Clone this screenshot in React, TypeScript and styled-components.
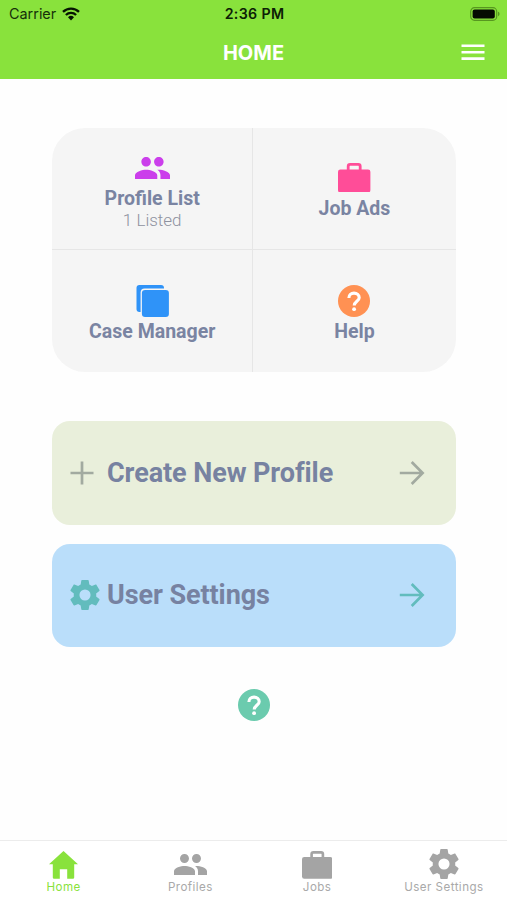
import React from "react";
import styled, { createGlobalStyle } from "styled-components";

const Global = createGlobalStyle`
  * { box-sizing: border-box; }
  body { margin: 0; background: #fff; }
  svg { display: block; flex: none; }
  button { border: 0; padding: 0; margin: 0; background: none; font: inherit; color: inherit; }
`;

const Screen = styled.div`
  width: 507px;
  height: 900px;
  display: flex;
  flex-direction: column;
  background: #fefefe;
  font-family: Roboto, sans-serif;
  overflow: hidden;
`;

const Header = styled.header`
  height: 79px;
  flex: none;
  background: #89e23c;
`;

const StatusBar = styled.div`
  height: 28px;
  padding: 0 7px 0 9px;
  display: grid;
  grid-template-columns: 1fr auto 1fr;
  align-items: center;
  font: 400 14.4px/28px Inter, sans-serif;
  color: #16300a;
`;

const Carrier = styled.div`
  display: flex;
  align-items: center;
  gap: 6px;
`;

const Time = styled.div`
  font-weight: 600;
  font-size: 14.2px;
  letter-spacing: 0.35px;
  color: #0c2005;
`;

const BatteryWrap = styled.div`
  display: flex;
  justify-content: flex-end;
`;

const TitleBar = styled.div`
  height: 49px;
  padding: 0 22px;
  display: grid;
  grid-template-columns: 1fr auto 1fr;
  align-items: center;
`;

const Title = styled.h1`
  grid-column: 2;
  margin: 0;
  font: 700 20px/24px Inter, sans-serif;
  letter-spacing: 0;
  color: #fff;
`;

const MenuButton = styled.button`
  justify-self: end;
`;

const Content = styled.main`
  flex: 1;
  padding: 49px 51.5px 0 52px;
  display: flex;
  flex-direction: column;
  align-items: stretch;
`;

const TileGrid = styled.section`
  height: 244px;
  flex: none;
  display: grid;
  grid-template-columns: 201.4px 1fr;
  grid-template-rows: 122px 122px;
  border-radius: 33px;
  background: #f5f5f5;
  overflow: hidden;
`;

const Tile = styled.button<{ $right?: boolean; $bottom?: boolean }>`
  display: flex;
  flex-direction: column;
  align-items: center;
  justify-content: center;
  padding-top: ${(p) => (p.$bottom ? 3 : 2)}px;
  border-right: ${(p) => (p.$right ? "0" : "1px solid #e6e6e6")};
  border-bottom: ${(p) => (p.$bottom ? "0" : "1px solid #e6e6e6")};
`;

const TileIcon = styled.span`
  height: 38px;
  display: flex;
  align-items: center;
`;

const TileTitle = styled.span`
  font-size: 19.5px;
  line-height: 24px;
  font-weight: 700;
  color: #7a84a2;
`;

const TileNote = styled.span`
  font-size: 17px;
  line-height: 19px;
  font-weight: 300;
  color: #8f929f;
`;

const ActionCard = styled.button<{ $bg: string; $top: number }>`
  height: 103.5px;
  margin-top: ${(p) => p.$top}px;
  flex: none;
  padding: 0 31px 0 18px;
  display: flex;
  align-items: center;
  border-radius: 18px;
  background: ${(p) => p.$bg};
`;

const ActionIcon = styled.span`
  width: 37px;
  display: flex;
`;

const ActionLabel = styled.span`
  flex: 1;
  text-align: left;
  font-size: 27px;
  line-height: 34px;
  font-weight: 700;
  letter-spacing: -0.08px;
  color: #7782a1;
`;

const HelpButton = styled.button`
  margin-top: 42px;
  align-self: center;
`;

const TabBar = styled.nav`
  height: 60px;
  flex: none;
  display: grid;
  grid-template-columns: repeat(4, 1fr);
  border-top: 1px solid #ececec;
  background: #fff;
`;

const Tab = styled.button<{ $active?: boolean }>`
  display: flex;
  flex-direction: column;
  align-items: center;
  color: ${(p) => (p.$active ? "#89e23c" : "#a9a9a9")};
`;

const TabIcon = styled.span<{ $lift?: number }>`
  height: 38px;
  padding-bottom: ${(p) => p.$lift ?? 0}px;
  display: flex;
  align-items: flex-end;
`;

const TabLabel = styled.span`
  margin-top: 0.5px;
  padding-left: 0.5px;
  font: 400 11.6px/14px Inter, sans-serif;
  letter-spacing: 0.45px;
`;

const WifiIcon = () => (
  <svg width="18" height="14" viewBox="0 0 18 14" fill="none" stroke="#061502" strokeWidth="2.3">
    <path d="M1 4.9a11.4 11.4 0 0 1 16 0M3.9 8a7.2 7.2 0 0 1 10.2 0" />
    <path d="M6 10.3a4.3 4.3 0 0 1 6 0L9 13.6z" fill="#061502" stroke="none" />
  </svg>
);

const BatteryIcon = () => (
  <svg width="30" height="14" viewBox="0 0 30 14">
    <rect x="0.7" y="0.7" width="26" height="12.6" rx="3.8" fill="none" stroke="#579720" strokeWidth="1.2" />
    <rect x="2.6" y="2.6" width="22.2" height="8.8" rx="2" fill="#050b02" />
    <path d="M28 4.8c2 .6 2 3.8 0 4.4z" fill="#579720" />
  </svg>
);

const MenuIcon = () => (
  <svg width="24" height="17" viewBox="0 0 24 17" fill="#fff">
    <path d="M0.5 0.5h23V3.1h-23zM0.5 6.9h23v2.6h-23zM0.5 13.3h23v2.6h-23z" />
  </svg>
);

const PeopleIcon = ({ width, color }: { width: number; color: string }) => (
  <svg width={width} height={(width * 14) / 22} viewBox="1 5 22 14" fill={color}>
    <path d="M16 11c1.66 0 2.99-1.34 2.99-3S17.66 5 16 5s-3 1.34-3 3 1.34 3 3 3zm-8 0c1.66 0 2.99-1.34 2.99-3S9.66 5 8 5 5 6.34 5 8s1.34 3 3 3zm0 2c-2.33 0-7 1.17-7 3.5V19h14v-2.5c0-2.33-4.67-3.5-7-3.5zm8 0c-.29 0-.62.02-.97.05 1.16.84 1.97 1.97 1.97 3.45V19h6v-2.5c0-2.33-4.67-3.5-7-3.5z" />
  </svg>
);

const WorkIcon = ({ width, color }: { width: number; color: string }) => (
  <svg width={width} height={(width * 29.5) / 32.4} viewBox="0 0 32.4 29.5">
    <rect x="0" y="6.4" width="32.4" height="23.1" rx="2.4" fill={color} />
    <path d="M10.2 8V3.3Q10.2 1.4 12.1 1.4H20.3Q22.2 1.4 22.2 3.3V8" fill="none" stroke={color} strokeWidth="2.8" />
  </svg>
);

const StackIcon = () => (
  <svg width="33" height="32" viewBox="0 0 33 32">
    <rect x="0.5" y="0" width="27.5" height="27" rx="3" fill="#2f93f8" />
    <rect x="4.6" y="3.6" width="29" height="29" rx="4" fill="#f5f5f5" />
    <rect x="5.9" y="4.9" width="27" height="27" rx="3.2" fill="#2f93f8" />
  </svg>
);

const HelpIcon = ({ color }: { color: string }) => (
  <svg width="32" height="32" viewBox="0 0 32 32" fill="none">
    <circle cx="16" cy="16" r="16" fill={color} />
    <path d="M10.9 12.9C10.9 9.9 13.1 8.1 16 8.1C19 8.1 21.2 10 21.2 12.7C21.2 16.2 16.2 16.4 16.2 20.6" stroke="#fff" strokeWidth="3.1" />
    <circle cx="16.1" cy="24.2" r="1.9" fill="#fff" />
  </svg>
);

const GearIcon = ({ size, color }: { size: number; color: string }) => (
  <svg width={size} height={size} viewBox="2 2 20 20" fill={color}>
    <path d="M19.43 12.98c.04-.32.07-.64.07-.98s-.03-.66-.07-.98l2.11-1.65c.19-.15.24-.42.12-.64l-2-3.46c-.12-.22-.39-.3-.61-.22l-2.49 1c-.52-.4-1.08-.73-1.69-.98l-.38-2.65C14.46 2.18 14.25 2 14 2h-4c-.25 0-.46.18-.49.42l-.38 2.65c-.61.25-1.17.59-1.69.98l-2.49-1c-.23-.09-.49 0-.61.22l-2 3.46c-.13.22-.07.49.12.64l2.11 1.65c-.04.32-.07.65-.07.98s.03.66.07.98l-2.11 1.65c-.19.15-.24.42-.12.64l2 3.46c.12.22.39.3.61.22l2.49-1c.52.4 1.08.73 1.69.98l.38 2.65c.03.24.24.42.49.42h4c.25 0 .46-.18.49-.42l.38-2.65c.61-.25 1.17-.59 1.69-.98l2.49 1c.23.09.49 0 .61-.22l2-3.46c.12-.22.07-.49-.12-.64l-2.11-1.65zM12 15.7a3.7 3.7 0 1 1 0-7.4 3.7 3.7 0 0 1 0 7.4z" />
  </svg>
);

const PlusIcon = () => (
  <svg width="24" height="24" viewBox="0 0 24 24" stroke="#a2aaa0" strokeWidth="2.7">
    <path d="M12 0.5v23M0.5 12h23" />
  </svg>
);

const ArrowIcon = ({ color }: { color: string }) => (
  <svg width="26" height="24" viewBox="0 0 26 24" fill="none" stroke={color} strokeWidth="2.7">
    <path d="M0.8 12H23.5M12.7 1L23.6 12L12.7 23" />
  </svg>
);

const HomeIcon = () => (
  <svg width="29" height="28" viewBox="0 0 29 28" fill="currentColor">
    <path d="M14.5 0L29 13.3H25.2V26.5Q25.2 27.8 23.9 27.8H18.2V18.2H10.8V27.8H5.1Q3.8 27.8 3.8 26.5V13.3H0z" />
  </svg>
);

export default function App() {
  return (
    <>
      <Global />
      <Screen>
        <Header>
          <StatusBar>
            <Carrier>Carrier <WifiIcon /></Carrier>
            <Time>2:36 PM</Time>
            <BatteryWrap><BatteryIcon /></BatteryWrap>
          </StatusBar>
          <TitleBar>
            <Title>HOME</Title>
            <MenuButton aria-label="Menu"><MenuIcon /></MenuButton>
          </TitleBar>
        </Header>
        <Content>
          <TileGrid>
            <Tile>
              <TileIcon><PeopleIcon width={35} color="#cb3eeb" /></TileIcon>
              <TileTitle>Profile List</TileTitle>
              <TileNote>1 Listed</TileNote>
            </Tile>
            <Tile $right>
              <TileIcon><WorkIcon width={32.4} color="#ff4d98" /></TileIcon>
              <TileTitle>Job Ads</TileTitle>
            </Tile>
            <Tile $bottom>
              <TileIcon><StackIcon /></TileIcon>
              <TileTitle>Case Manager</TileTitle>
            </Tile>
            <Tile $right $bottom>
              <TileIcon><HelpIcon color="#ff9153" /></TileIcon>
              <TileTitle>Help</TileTitle>
            </Tile>
          </TileGrid>
          <ActionCard $bg="#e9efdb" $top={49}>
            <ActionIcon><PlusIcon /></ActionIcon>
            <ActionLabel>Create New Profile</ActionLabel>
            <ArrowIcon color="#a2aaa0" />
          </ActionCard>
          <ActionCard $bg="#badefa" $top={19}>
            <ActionIcon><GearIcon size={30} color="#62bcbd" /></ActionIcon>
            <ActionLabel>User Settings</ActionLabel>
            <ArrowIcon color="#62bcbd" />
          </ActionCard>
          <HelpButton aria-label="Help"><HelpIcon color="#6bcbae" /></HelpButton>
        </Content>
        <TabBar>
          <Tab $active><TabIcon><HomeIcon /></TabIcon><TabLabel>Home</TabLabel></Tab>
          <Tab><TabIcon $lift={4}><PeopleIcon width={33} color="#a4a4a4" /></TabIcon><TabLabel>Profiles</TabLabel></Tab>
          <Tab><TabIcon><WorkIcon width={30.5} color="#a4a4a4" /></TabIcon><TabLabel>Jobs</TabLabel></Tab>
          <Tab><TabIcon><GearIcon size={30} color="#a4a4a4" /></TabIcon><TabLabel>User Settings</TabLabel></Tab>
        </TabBar>
      </Screen>
    </>
  );
}
